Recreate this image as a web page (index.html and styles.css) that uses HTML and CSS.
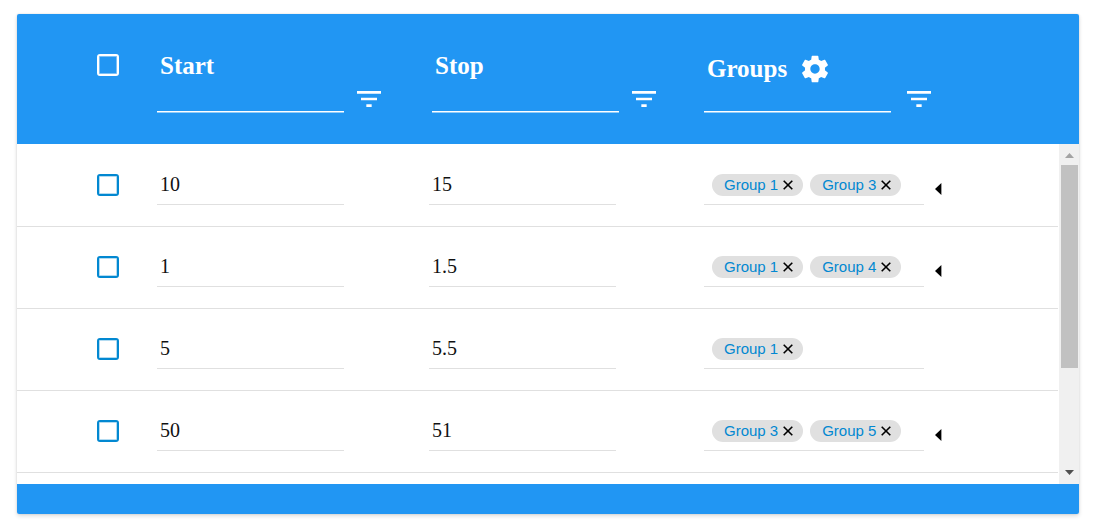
FILE: index.html
```html
<!DOCTYPE html>
<html lang="en">
<head>
<meta charset="utf-8">
<title>Groups</title>
<link rel="stylesheet" href="styles.css">
</head>
<body>
<svg class="sprite" aria-hidden="true">
  <symbol id="filter" viewBox="0 0 24 24"><path d="M10 18h4v-2h-4v2zM3 6v2h18V6H3zm3 7h12v-2H6v2z"/></symbol>
  <symbol id="gear" viewBox="0 0 24 24"><path d="M19.43 12.98c.04-.32.07-.64.07-.98s-.03-.66-.07-.98l2.11-1.65c.19-.15.24-.42.12-.64l-2-3.46c-.12-.22-.39-.3-.61-.22l-2.49 1c-.52-.4-1.08-.73-1.69-.98l-.38-2.65C14.46 2.18 14.25 2 14 2h-4c-.25 0-.46.18-.49.42l-.38 2.65c-.61.25-1.17.59-1.69.98l-2.49-1c-.23-.09-.49 0-.61.22l-2 3.46c-.13.22-.07.49.12.64l2.11 1.65c-.04.32-.07.65-.07.98s.03.66.07.98l-2.11 1.65c-.19.15-.24.42-.12.64l2 3.46c.12.22.39.3.61.22l2.49-1c.52.4 1.08.73 1.69.98l.38 2.65c.03.24.24.42.49.42h4c.25 0 .46-.18.49-.42l.38-2.65c.61-.25 1.17-.59 1.69-.98l2.49 1c.23.09.49 0 .61-.22l2-3.46c.12-.22.07-.49-.12-.64l-2.11-1.65zM12 15.5c-1.93 0-3.5-1.57-3.5-3.5s1.57-3.5 3.5-3.5 3.5 1.57 3.5 3.5-1.57 3.5-3.5 3.5z"/></symbol>
  <symbol id="cross" viewBox="0 0 10 10"><path d="M.7.7l8.6 8.6M9.3.7L.7 9.3" fill="none" stroke="currentColor" stroke-width="1.6"/></symbol>
  <symbol id="caret" viewBox="0 0 7 12"><path d="M0 6L6.4 0v12z"/></symbol>
</svg>
<main class="card">
  <table class="grid">
    <thead class="head">
      <tr class="row">
        <th class="pick"><input class="check" type="checkbox" aria-label="Select all rows"></th>
        <th class="cell">
          <div class="title">Start</div>
          <div class="filter"><input class="filter-input" type="text" aria-label="Filter start"><button class="icon-btn" aria-label="Filter by start"><svg class="icon"><use href="#filter"/></svg></button></div>
        </th>
        <th class="cell cell-stop">
          <div class="title">Stop</div>
          <div class="filter"><input class="filter-input" type="text" aria-label="Filter stop"><button class="icon-btn" aria-label="Filter by stop"><svg class="icon"><use href="#filter"/></svg></button></div>
        </th>
        <th class="cell">
          <div class="title title-tools">Groups <button class="icon-btn" aria-label="Group settings"><svg class="icon"><use href="#gear"/></svg></button></div>
          <div class="filter filter-wide"><input class="filter-input" type="text" aria-label="Filter groups"><button class="icon-btn" aria-label="Filter by group"><svg class="icon"><use href="#filter"/></svg></button></div>
        </th>
      </tr>
    </thead>
    <tbody class="body">
      <tr class="row">
        <td class="pick"><input class="check" type="checkbox" aria-label="Select row 1"></td>
        <td class="cell"><input class="value" type="text" value="10" aria-label="Start"></td>
        <td class="cell"><input class="value" type="text" value="15" aria-label="Stop"></td>
        <td class="cell groups">
          <div class="chips">
            <span class="chip">Group 1<button class="remove" aria-label="Remove Group 1"><svg class="cross"><use href="#cross"/></svg></button></span>
            <span class="chip">Group 3<button class="remove" aria-label="Remove Group 3"><svg class="cross"><use href="#cross"/></svg></button></span>
          </div>
          <button class="expand" aria-label="Expand groups"><svg class="caret"><use href="#caret"/></svg></button>
        </td>
      </tr>
      <tr class="row">
        <td class="pick"><input class="check" type="checkbox" aria-label="Select row 2"></td>
        <td class="cell"><input class="value" type="text" value="1" aria-label="Start"></td>
        <td class="cell"><input class="value" type="text" value="1.5" aria-label="Stop"></td>
        <td class="cell groups">
          <div class="chips">
            <span class="chip">Group 1<button class="remove" aria-label="Remove Group 1"><svg class="cross"><use href="#cross"/></svg></button></span>
            <span class="chip">Group 4<button class="remove" aria-label="Remove Group 4"><svg class="cross"><use href="#cross"/></svg></button></span>
          </div>
          <button class="expand" aria-label="Expand groups"><svg class="caret"><use href="#caret"/></svg></button>
        </td>
      </tr>
      <tr class="row">
        <td class="pick"><input class="check" type="checkbox" aria-label="Select row 3"></td>
        <td class="cell"><input class="value" type="text" value="5" aria-label="Start"></td>
        <td class="cell"><input class="value" type="text" value="5.5" aria-label="Stop"></td>
        <td class="cell groups">
          <div class="chips">
            <span class="chip">Group 1<button class="remove" aria-label="Remove Group 1"><svg class="cross"><use href="#cross"/></svg></button></span>
          </div>
        </td>
      </tr>
      <tr class="row">
        <td class="pick"><input class="check" type="checkbox" aria-label="Select row 4"></td>
        <td class="cell"><input class="value" type="text" value="50" aria-label="Start"></td>
        <td class="cell"><input class="value" type="text" value="51" aria-label="Stop"></td>
        <td class="cell groups">
          <div class="chips">
            <span class="chip">Group 3<button class="remove" aria-label="Remove Group 3"><svg class="cross"><use href="#cross"/></svg></button></span>
            <span class="chip">Group 5<button class="remove" aria-label="Remove Group 5"><svg class="cross"><use href="#cross"/></svg></button></span>
          </div>
          <button class="expand" aria-label="Expand groups"><svg class="caret"><use href="#caret"/></svg></button>
        </td>
      </tr>
    </tbody>
  </table>
  <div class="scrollbar" aria-hidden="true">
    <svg class="arrow arrow-up" viewBox="0 0 9 5"><path d="M0 5L4.5 0L9 5z"/></svg>
    <div class="track"><div class="thumb"></div></div>
    <svg class="arrow arrow-down" viewBox="0 0 9 5"><path d="M0 0L4.5 5L9 0z"/></svg>
  </div>
  <footer class="foot"></footer>
</main>
</body>
</html>
```

FILE: styles.css
```css
* {
  box-sizing: border-box;
}

body {
  margin: 0;
  padding: 14px 20px 14px 17px;
  background: #fff;
  font-family: "Liberation Serif", "Times New Roman", serif;
}

.sprite {
  display: none;
}

button {
  display: flex;
  margin: 0;
  padding: 0;
  border: 0;
  background: none;
  color: inherit;
}

.card {
  display: grid;
  grid-template-columns: 1fr 20px;
  grid-template-rows: auto 340px auto;
  border-radius: 2px;
  box-shadow: 0 2px 4px rgba(0, 0, 0, 0.14), 0 0 2px rgba(0, 0, 0, 0.12);
}

/* The header spans the scrollbar column; the body sits beside it. */
.grid {
  display: contents;
}

.head {
  display: block;
  grid-column: 1 / 3;
  height: 130px;
  padding-right: 21px;
  border-radius: 2px 2px 0 0;
  background: #2196f3;
  color: #fff;
}

.body {
  display: block;
  overflow: hidden;
  margin-right: 1px;
  color: #111;
}

.row {
  display: grid;
  grid-template-columns: 140px 272fr 275fr 354fr;
}

.body .row {
  padding: 22px 0 21px;
  box-shadow: 0 1px 0 #e0e0e0;
}

.pick,
.cell {
  display: block;
  padding: 0;
  text-align: left;
}

.pick {
  padding: 8px 0 0 80px;
}

.head .pick {
  padding-top: 40px;
}

.head .cell {
  padding-top: 39px;
}

.head .cell-stop {
  padding-left: 3px;
}

.check {
  display: block;
  appearance: none;
  width: 22px;
  height: 22px;
  margin: 0;
  border: 2px solid #0288d1;
  border-radius: 3px;
  box-shadow: inset 0 0 0 1px rgba(2, 136, 209, 0.3);
}

.head .check {
  border-color: #fff;
  box-shadow: inset 0 0 0 1px rgba(255, 255, 255, 0.4);
}

.title {
  display: flex;
  height: 30px;
  padding-left: 3px;
  font-size: 25px;
  font-weight: 700;
  line-height: 26px;
}

.title-tools {
  align-items: center;
  gap: 12px;
  padding-top: 2px;
}

.icon {
  width: 32px;
  height: 32px;
  fill: currentColor;
}

.filter {
  display: flex;
  align-items: flex-start;
  gap: 9px;
}

.filter-wide {
  gap: 12px;
}

.filter-input,
.value {
  width: 187px;
  padding: 0 3px;
  border: 0;
  border-radius: 0;
  outline: 0;
  background: none;
  color: inherit;
  font: 20px "Liberation Serif", "Times New Roman", serif;
}

.filter-input {
  height: 29px;
  border-bottom: 1px solid #fff;
  box-shadow: 0 1px 0 rgba(255, 255, 255, 0.5);
}

.value {
  display: block;
  height: 39px;
  padding-bottom: 1px;
  border-bottom: 1px solid #e0e0e0;
}

.groups {
  display: flex;
  align-items: flex-start;
  gap: 11px;
}

.chips {
  display: flex;
  align-items: flex-start;
  gap: 7px;
  width: 220px;
  height: 39px;
  padding: 8px 8px 0;
  border-bottom: 1px solid #e0e0e0;
}

.chip {
  display: flex;
  align-items: center;
  gap: 5px;
  height: 22px;
  padding: 0 10px 0 12px;
  border-radius: 11px;
  background: #e0e0e0;
  color: #0288d1;
  font: 15px/22px "Liberation Sans", Arial, sans-serif;
  white-space: nowrap;
}

.remove {
  color: #000;
}

.cross {
  width: 10px;
  height: 10px;
}

.expand {
  padding-top: 17px;
}

.caret {
  width: 7px;
  height: 12px;
  fill: #000;
}

.scrollbar {
  display: flex;
  flex-direction: column;
  align-items: center;
  padding: 9px 0;
  background: #f0f0f0;
}

.arrow {
  width: 9px;
  height: 5px;
}

.arrow-up {
  fill: #a3a3a3;
}

.arrow-down {
  fill: #505050;
}

.track {
  flex: 1;
  width: 17px;
  padding: 7px 0;
}

.thumb {
  height: 68%;
  background: #c1c1c1;
}

.foot {
  grid-column: 1 / 3;
  height: 30px;
  border-radius: 0 0 2px 2px;
  background: #2196f3;
}
```
